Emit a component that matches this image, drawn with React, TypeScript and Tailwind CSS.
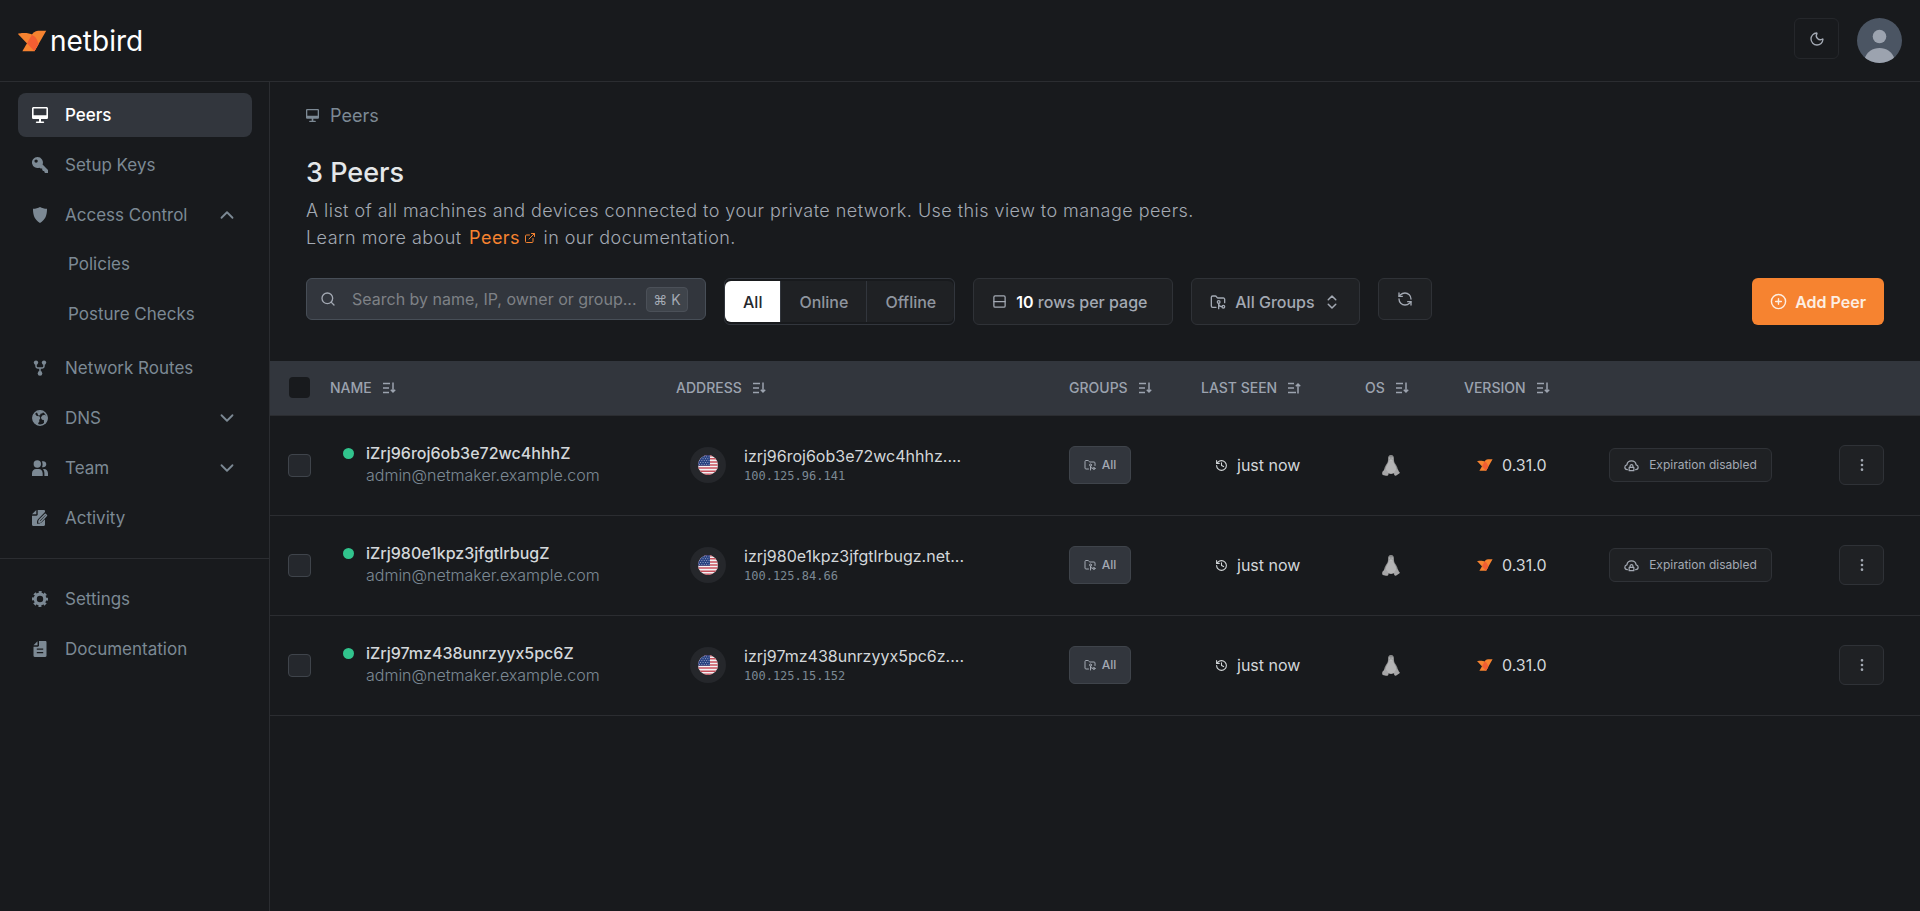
import React, { useState } from "react";
import {
  ChevronDown,
  ChevronUp,
  ChevronsUpDown,
  CirclePlus,
  EllipsisVertical,
  ExternalLink,
  FolderGit2,
  History,
  Moon,
  RefreshCcw,
  Rows2,
  Search,
} from "lucide-react";

type IconProps = { className?: string };

function Bird({ className }: IconProps) {
  return (
    <svg viewBox="0 0 31 23" className={className} aria-hidden="true">
      <path fill="#F68330" d="M21.46.52c-3.64.34-5.46 2.44-6.14 3.5L4.66 22.47h12.86L30.19.52h-8.73Z" />
      <path fill="#F68330" d="M17.53 22.47 0 3.89s19.82-5.33 21.75 11.28l-4.22 7.3Z" />
      <path fill="#F35E32" d="M14.92 4.7 9.55 14.02l7.97 8.45 4.22-7.31c-.67-5.71-3.45-8.83-6.82-10.46Z" />
    </svg>
  );
}

function PeerIcon({ className }: IconProps) {
  return (
    <svg viewBox="0 0 16 16" fill="currentColor" className={className} aria-hidden="true">
      <path
        fillRule="evenodd"
        d="M1.6 0h12.8C15.3 0 16 .7 16 1.6v8.8c0 .9-.7 1.6-1.6 1.6H9v2.4h2.4c.5 0 .8.4.8.8s-.3.8-.8.8H4.600c-.5 0-.8-.4-.8-.8s.3-.8.8-.8H7V12H1.600C.7 12 0 11.300 0 10.400V1.600C0 .7.7 0 1.600 0Zm0 1.500v6.700h12.800V1.500H1.600Z"
      />
    </svg>
  );
}

function KeyIcon({ className }: IconProps) {
  return (
    <svg viewBox="0 0 16 16" fill="currentColor" className={className} aria-hidden="true">
      <path
        fillRule="evenodd"
        d="M5.500 0A5.500 5.500 0 1 0 7.400 10.650L8.700 11.500h1.500v1.500l.9.900h1.200v1.200l.8.900H16v-2.900l-5.450-5.600A5.500 5.500 0 0 0 5.500 0ZM4.100 2.400a1.700 1.700 0 1 1 0 3.400 1.700 1.700 0 0 1 0-3.400Z"
      />
    </svg>
  );
}

function ShieldIcon({ className }: IconProps) {
  return (
    <svg viewBox="0 0 16 16" fill="currentColor" className={className} aria-hidden="true">
      <path d="M8 0c2 1.200 4.300 1.700 7 1.800.1 6.400-1.700 11.200-7 14.200C2.700 13 .9 8.200 1 1.800 3.700 1.700 6 1.200 8 0Z" />
    </svg>
  );
}

function RoutesIcon({ className }: IconProps) {
  return (
    <svg viewBox="0 0 16 16" className={className} aria-hidden="true">
      <g fill="currentColor">
        <circle cx="4" cy="2.600" r="2.200" />
        <circle cx="12" cy="2.600" r="2.200" />
        <circle cx="8" cy="13.400" r="2.300" />
      </g>
      <path d="M4 3v3.300C4 7.300 4.700 8 5.700 8h4.600c1 0 1.700-.7 1.700-1.700V3M8 8v5" fill="none" stroke="currentColor" strokeWidth="1.500" />
    </svg>
  );
}

function GlobeIcon({ className }: IconProps) {
  return (
    <svg viewBox="0 0 16 16" className={className} aria-hidden="true">
      <circle cx="8" cy="8" r="7.200" fill="none" stroke="currentColor" strokeWidth="1.500" />
      <path
        fill="currentColor"
        d="M1 4.800 3.200 4l1.600 1.900 2.600.4.900 2-1.100 1.600.1 1.900-1.100 1.100.2 2.400C3 14.600.8 11.400.8 8L1 4.800ZM4.800 2l3.200-1.200 3.200.5-.6 1.900-2.200.6-.2 1.500-1.900.2L4.800 2ZM15.200 6.500l-2.400-1.700-2.600.6-1.300 2.300 1.100 2 1.900.4.100 2.900.9 1.300c1.600-1.500 2.500-3.800 2.500-6.300l-.2-1.500Z"
      />
    </svg>
  );
}

function TeamIcon({ className }: IconProps) {
  return (
    <svg viewBox="0 0 16 16" fill="currentColor" className={className} aria-hidden="true">
      <circle cx="5.300" cy="4" r="3.700" />
      <path d="M0 13.500C0 10.600 1.900 9 4 9h2.800c2.200 0 3.900 1.800 3.900 4.500V16H0v-2.500ZM10 7.200c.9-1.900.8-3.900-.2-5.600 2.200-1 4.500.4 4.500 2.700 0 2.100-2.200 3.600-4.300 2.900ZM11 9h1c2.300 0 4 1.800 4 4.500V16h-3.600v-2.500c0-1.800-.5-3.300-1.400-4.500Z" />
    </svg>
  );
}

function ActivityIcon({ className }: IconProps) {
  return (
    <svg viewBox="0 0 16 16" fill="currentColor" className={className} aria-hidden="true">
      <path d="M0 4.300 4.300 4.300V0L0 4.300Z" />
      <path d="M5.700 0h6.200c.6 0 1.100.5 1.100 1.100v.9L6 9.200c-.5.5-.8 1.200-.9 2l-.1 2.500 2.500-.2c.8-.1 1.500-.4 2-.9L13 9.300v5.500c0 .7-.5 1.200-1.200 1.200H1.200C.5 16 0 15.500 0 14.800V5.700h4.500c.7 0 1.200-.5 1.200-1.200V0Z" />
      <path d="m13.300 4.300 1.200 1.300-5.300 5.600c-.8.9-2.300 1-2.300 1s0-1.600.8-2.400l5.600-5.500Z" fill="none" stroke="currentColor" strokeWidth="1.500" strokeLinejoin="round" />
    </svg>
  );
}

function GearIcon({ className }: IconProps) {
  return (
    <svg viewBox="0 0 16 16" className={className} aria-hidden="true">
      <circle cx="8" cy="8" r="4.800" fill="none" stroke="currentColor" strokeWidth="3.200" />
      <circle cx="8" cy="8" r="6.800" fill="none" stroke="currentColor" strokeWidth="2.400" strokeDasharray="2.900 2.440" strokeDashoffset="1.450" />
    </svg>
  );
}

function DocIcon({ className }: IconProps) {
  return (
    <svg viewBox="0 0 16 16" fill="currentColor" className={className} aria-hidden="true">
      <path d="M1.500 4.300h4V.2l-4 4.100Z" />
      <path fillRule="evenodd" d="M7 0h6.300c.7 0 1.200.5 1.200 1.200v13.600c0 .7-.5 1.200-1.200 1.200H2.700c-.7 0-1.200-.5-1.200-1.200V5.700h4.300c.7 0 1.200-.5 1.200-1.200V0ZM4.800 7.400v1.400h6.400V7.400H4.800Zm0 3.500v1.400h6.400v-1.400H4.800Z" />
    </svg>
  );
}

function SortIcon({ up = false }: { up?: boolean }) {
  return (
    <svg viewBox="0 0 14 14" className="size-3.5 shrink-0" fill="none" stroke="currentColor" strokeWidth="1.500" aria-hidden="true">
      <path d={up ? "M1 2.500h6M1 7h6M1 11.500h8" : "M1 2.500h7M1 7h6M1 11.500h6"} />
      <path d={up ? "M11 12.500v-9M8.800 5.300 11 3l2.200 2.300" : "M11 1.500v9M8.800 8.700 11 11l2.200-2.300"} />
    </svg>
  );
}

function CloudLockIcon({ className }: IconProps) {
  return (
    <svg viewBox="0 0 16 16" className={className} fill="none" stroke="currentColor" strokeWidth="1.300" strokeLinejoin="round" strokeLinecap="round" aria-hidden="true">
      <path d="M3.600 12.500C1.900 12.300.9 11.200.9 9.800c0-1.300.9-2.300 2.200-2.500C3.400 4.700 5.400 3 8 3s4.600 1.700 4.900 4.300c1.300.2 2.200 1.200 2.200 2.500 0 1.400-1 2.500-2.700 2.700" />
      <path d="M5.500 10h5v3.500h-5zM6.500 10V8.600a1.500 1.500 0 0 1 3 0V10" />
    </svg>
  );
}

function Tux() {
  return (
    <svg viewBox="0 0 18 21" className="h-[21px] w-[18px]" role="img" aria-label="Linux">
      <path fill="#8b8c8d" d="M9 0C6.600 0 5.900 1.800 6 4.200c.1 2.200-.4 3.200-1.800 5.300C2.700 11.900 2 13.500 2.200 15.800L9 19l6.800-3.200c.2-2.300-.5-3.900-2-6.300C12.400 7.400 11.900 6.400 12 4.200 12.100 1.800 11.400 0 9 0Z" />
      <path fill="#b5b5b6" d="M9 5.500c-1 0-1.700-.7-2.300-.3-.2 2.200-.9 3.200-1.900 5-1 1.800-1.800 4.100-1.300 6.300 1.300 3 9.700 3 11 0 .5-2.200-.3-4.500-1.300-6.300-1-1.800-1.700-2.800-1.900-5-.6-.4-1.300.3-2.300.3Z" />
      <path fill="#a6a6a7" d="M2.500 14.300c1.200-.3 2.500 1.500 3.700 3.300.6 1.200.4 2.600-.7 3.100-1.200.4-3-.7-4.700-.8-.8-.3-.7-1.600-.5-2.700.2-1 1.400-1 2.200-2.900ZM15.500 14.300c-1.200-.3-2.700 1.200-3.300 3.200-.3 1.600-.2 2.700.9 3.200 1.200.3 2.200-1.200 4.200-2.200.7-.5.7-1-.2-1.700-.6-.6-.6-2.200-1.600-2.500Z" />
      <path fill="#c9c9ca" d="M7.200 2.600h1.200v1.200H7.200zM9.500 2.600h1.200v1.200H9.500zM7 4.500h4L9 5.900z" />
    </svg>
  );
}

function UsFlag() {
  return (
    <svg viewBox="0 0 20 20" className="size-5" role="img" aria-label="United States">
      <clipPath id="flag-disc">
        <circle cx="10" cy="10" r="10" />
      </clipPath>
      <g clipPath="url(#flag-disc)">
        <path fill="#f2f2f4" d="M0 0h20v20H0z" />
        <path stroke="#c8505c" strokeWidth="1.540" d="M0 .77h20M0 3.850h20M0 6.920h20M0 10h20M0 13.080h20M0 16.150h20M0 19.230h20" />
        <path fill="#27407f" d="M0 0h12v10.770H0z" />
        <path stroke="#aab6d4" strokeWidth=".9" strokeDasharray=".9 1.500" d="M1 1.800h11M2.200 3.700h9.800M1 5.600h11M2.200 7.500h9.800M1 9.400h11" />
      </g>
    </svg>
  );
}

const navItem = "flex h-11 w-full items-center rounded-lg px-3.5 text-left text-[17px] leading-[26px]";

function NavLink({ icon: Icon, label, active = false }: { icon: React.FC<IconProps>; label: string; active?: boolean }) {
  return (
    <li>
      <a
        href={"#" + label.toLowerCase().replace(" ", "-")}
        aria-current={active ? "page" : undefined}
        className={navItem + (active ? " bg-[#32363d] font-medium text-white" : " text-[#7c8994]")}
      >
        <Icon className="size-4 shrink-0" />
        <span className="ml-[17px]">{label}</span>
      </a>
    </li>
  );
}

function NavGroup({
  icon: Icon,
  label,
  defaultOpen = false,
  children,
}: {
  icon: React.FC<IconProps>;
  label: string;
  defaultOpen?: boolean;
  children?: React.ReactNode;
}) {
  const [open, setOpen] = useState(defaultOpen);
  const Chevron = open ? ChevronUp : ChevronDown;
  return (
    <li>
      <button type="button" aria-expanded={open} onClick={() => setOpen(!open)} className={navItem + " text-[#7c8994]"}>
        <Icon className="size-4 shrink-0" />
        <span className="ml-[17px] grow">{label}</span>
        <Chevron className="size-[22px] shrink-0" />
      </button>
      {open && children && <ul className="flex flex-col gap-1.5 pt-[5px] pb-1">{children}</ul>}
    </li>
  );
}

function SubLink({ label }: { label: string }) {
  return (
    <li>
      <a href={"#" + label.toLowerCase().replace(" ", "-")} className="flex h-11 items-center pl-[50px] text-[17px] leading-[26px] text-[#7c8994]">
        {label}
      </a>
    </li>
  );
}

const peers = [
  { name: "iZrj96roj6ob3e72wc4hhhZ", dns: "izrj96roj6ob3e72wc4hhhz....", ip: "100.125.96.141", expirationDisabled: true },
  { name: "iZrj980e1kpz3jfgtlrbugZ", dns: "izrj980e1kpz3jfgtlrbugz.net...", ip: "100.125.84.66", expirationDisabled: true },
  { name: "iZrj97mz438unrzyyx5pc6Z", dns: "izrj97mz438unrzyyx5pc6z....", ip: "100.125.15.152", expirationDisabled: false },
];

const columns = [
  { label: "Name" },
  { label: "Address" },
  { label: "Groups" },
  { label: "Last seen", up: true },
  { label: "OS" },
  { label: "Version" },
];

const outlineButton = "flex items-center rounded-md border border-[#2f3237] bg-[#1f2124] text-[#a3a9b3]";

export default function App() {
  const [status, setStatus] = useState("All");
  return (
    <div className="flex min-h-screen flex-col bg-[#181a1d] font-['Inter',sans-serif] text-[16px] text-[#a3a9b3] antialiased">
      <header className="flex items-start justify-between border-b border-[#2b2d31] p-[18px]">
        <a href="#home" className="flex h-[45px] items-center gap-[3px] text-[28px] text-white">
          <Bird className="h-[22px] w-[29px]" />
          <span>netbird</span>
        </a>
        <div className="flex items-start gap-[18px]">
          <button type="button" aria-label="Toggle theme" className="flex h-[41px] w-[45px] items-center justify-center rounded-md border border-[#25272b]">
            <Moon className="size-4" />
          </button>
          <button type="button" aria-label="Account" className="size-[45px] overflow-hidden rounded-full bg-[#4b5563]">
            <svg viewBox="0 0 45 45" fill="#9ca3af" aria-hidden="true">
              <circle cx="22.500" cy="18.500" r="6.800" />
              <path d="M7.500 41C10 33.500 15.500 30 22.500 30S35 33.500 37.500 41L30 46H15Z" />
            </svg>
          </button>
        </div>
      </header>

      <div className="flex grow">
        <aside className="w-[270px] shrink-0 border-r border-[#2b2d31] pt-[11px]">
          <nav aria-label="Main">
            <ul className="flex flex-col gap-1.5 pr-[17px] pl-[18px]">
              <NavLink icon={PeerIcon} label="Peers" active />
              <NavLink icon={KeyIcon} label="Setup Keys" />
              <NavGroup icon={ShieldIcon} label="Access Control" defaultOpen>
                <SubLink label="Policies" />
                <SubLink label="Posture Checks" />
              </NavGroup>
              <NavLink icon={RoutesIcon} label="Network Routes" />
              <NavGroup icon={GlobeIcon} label="DNS" />
              <NavGroup icon={TeamIcon} label="Team" />
              <NavLink icon={ActivityIcon} label="Activity" />
            </ul>
            <ul className="mt-[18px] flex flex-col gap-1.5 border-t border-[#2b2d31] pt-[18px] pr-[17px] pl-[18px]">
              <NavLink icon={GearIcon} label="Settings" />
              <NavLink icon={DocIcon} label="Documentation" />
            </ul>
          </nav>
        </aside>

        <main className="min-w-0 grow pt-[21px]">
          <section className="px-9">
            <nav aria-label="Breadcrumb" className="flex h-6 items-center gap-[11px] text-[18px] text-[#7c8994]">
              <PeerIcon className="size-[13px]" />
              <a href="#peers">Peers</a>
            </nav>
            <h1 className="mt-7 text-[27px] leading-9 font-medium text-[#e4e7e9]">3 Peers</h1>
            <p className="mt-1.5 text-[18px] leading-[27px] font-light tracking-wide">
              A list of all machines and devices connected to your private network. Use this view to manage peers.
              <br />
              Learn more about{" "}
              <a href="#docs" className="mx-0.5 inline-flex items-center gap-1 font-normal text-[#f68330]">
                Peers <ExternalLink className="size-3" />
              </a>{" "}
              in our documentation.
            </p>

            <div className="mt-[27px] flex items-start gap-[18px]">
              <label className="flex h-[42px] w-[400px] items-center rounded-md border border-[#474e57] bg-[#32363d] pr-[17px] pl-[13px]">
                <Search className="size-4 shrink-0" />
                <input
                  type="text"
                  aria-label="Search peers"
                  placeholder="Search by name, IP, owner or group..."
                  className="ml-4 min-w-0 grow bg-transparent text-[16px] outline-none placeholder:text-[#7e8186]"
                />
                <kbd className="flex h-[25px] w-[42px] shrink-0 items-center justify-center rounded-sm border border-[#4b5058] bg-[#3f444b] font-['Inter','DejaVu_Sans',sans-serif] text-[14px]">
                  ⌘ K
                </kbd>
              </label>

              <div role="group" aria-label="Status" className="flex h-[47px] items-center rounded-md border border-[#32363d]">
                {["All", "Online", "Offline"].map((s) => (
                  <button
                    key={s}
                    type="button"
                    aria-pressed={s === status}
                    onClick={() => setStatus(s)}
                    className={
                      "h-[41px] border-l px-[18px] font-medium first:rounded-l-md first:border-l-0 last:rounded-r-md " +
                      (s === status ? "border-white bg-white text-[#25282d]" : "border-[#32363d] bg-[#1f2124] text-[#8f959f]")
                    }
                  >
                    {s}
                  </button>
                ))}
              </div>

              <button type="button" className={outlineButton + " h-[47px] w-[200px] px-[18px] font-medium"}>
                <Rows2 className="size-[15px]" />
                <span className="ml-[9px]">
                  <span className="font-semibold text-white">10</span> rows per page
                </span>
              </button>

              <button type="button" className={outlineButton + " h-[47px] px-[18px] font-medium"}>
                <FolderGit2 className="size-4" />
                <span className="ml-[9px]">All Groups</span>
                <ChevronsUpDown className="ml-2 size-[18px]" />
              </button>

              <button type="button" aria-label="Refresh" className={outlineButton + " h-[42px] w-[54px] justify-center"}>
                <RefreshCcw className="size-4" />
              </button>

              <button type="button" className="ml-auto flex h-[47px] items-center gap-2 rounded-md bg-[#f68330] px-[18px] font-semibold text-[#fdeee2]">
                <CirclePlus className="size-[17px]" />
                Add Peer
              </button>
            </div>
          </section>

          <table className="mt-9 w-full table-fixed border-collapse text-left">
            <colgroup>
              <col className="w-[42px]" />
              <col className="w-[346px]" />
              <col className="w-[393px]" />
              <col className="w-[132px]" />
              <col className="w-[164px]" />
              <col className="w-[99px]" />
              <col className="w-[145px]" />
              <col className="w-[230px]" />
              <col className="w-[99px]" />
            </colgroup>
            <thead>
              <tr className="h-[54px] border-b border-[#2b2d31] bg-[#32363d]">
                <th className="pl-[19px]">
                  <input type="checkbox" aria-label="Select all" className="block size-[21px] appearance-none rounded-sm bg-[#181a1d]" />
                </th>
                {columns.map((c) => (
                  <th key={c.label} className="px-[18px] text-[14px] font-medium text-[#9ca3af] uppercase">
                    <button type="button" className="flex items-center gap-2.5 whitespace-nowrap uppercase">
                      {c.label}
                      <SortIcon up={c.up} />
                    </button>
                  </th>
                ))}
                <th aria-label="Expiration" />
                <th aria-label="Actions" />
              </tr>
            </thead>
            <tbody>
              {peers.map((p) => (
                <tr key={p.name} className="h-[100px] border-b border-[#2b2d31]">
                  <td className="pl-[18px]">
                    <input type="checkbox" aria-label={"Select " + p.name} className="block size-[23px] appearance-none rounded-sm border border-[#3f444b] bg-[#25282d]" />
                  </td>
                  <td className="pb-0.5 pl-[31px]">
                    <div className="flex gap-3">
                      <span className="mt-1.5 size-[11px] shrink-0 rounded-full bg-[#31c48d]" />
                      <div className="flex flex-col leading-[22px]">
                        <span className="font-medium text-[#d3d7da]">{p.name}</span>
                        <span className="font-light text-[#7c8994]">admin@netmaker.example.com</span>
                      </div>
                    </div>
                  </td>
                  <td className="pl-8">
                    <div className="flex items-center gap-[18px]">
                      <span className="flex size-9 shrink-0 items-center justify-center rounded-full bg-[#25272b]">
                        <UsFlag />
                      </span>
                      <div className="flex flex-col">
                        <span className="leading-[22px] text-[#d3d7da]">{p.dns}</span>
                        <span className="font-['DejaVu_Sans_Mono',monospace] text-[12px] leading-[18px] text-[#7c8994]">{p.ip}</span>
                      </div>
                    </div>
                  </td>
                  <td className="pl-[18px]">
                    <span className="flex h-[38px] w-[62px] items-center justify-center gap-1.5 rounded-md border border-[#3f444b] bg-[#32363d] text-[12px] font-medium">
                      <FolderGit2 className="size-3" />
                      All
                    </span>
                  </td>
                  <td className="pl-8 text-[#d3d7da]">
                    <div className="flex items-center gap-[9px]">
                      <History className="size-[13px]" />
                      just now
                    </div>
                  </td>
                  <td className="pl-[35px]">
                    <Tux />
                  </td>
                  <td className="pl-[31px] text-[#d3d7da]">
                    <div className="flex items-center gap-[9px]">
                      <Bird className="h-3 w-4" />
                      0.31.0
                    </div>
                  </td>
                  <td className="pl-[18px]">
                    {p.expirationDisabled && (
                      <span className="flex h-[34px] w-[163px] items-center justify-center gap-2.5 rounded-md border border-[#2f3237] bg-[#1f2124] text-[12px] whitespace-nowrap">
                        <CloudLockIcon className="size-[15px]" />
                        Expiration disabled
                      </span>
                    )}
                  </td>
                  <td className="pr-9">
                    <button type="button" aria-label={"Actions for " + p.name} className={outlineButton + " ml-auto h-10 w-[45px] justify-center"}>
                      <EllipsisVertical className="size-4" />
                    </button>
                  </td>
                </tr>
              ))}
            </tbody>
          </table>
        </main>
      </div>
    </div>
  );
}
